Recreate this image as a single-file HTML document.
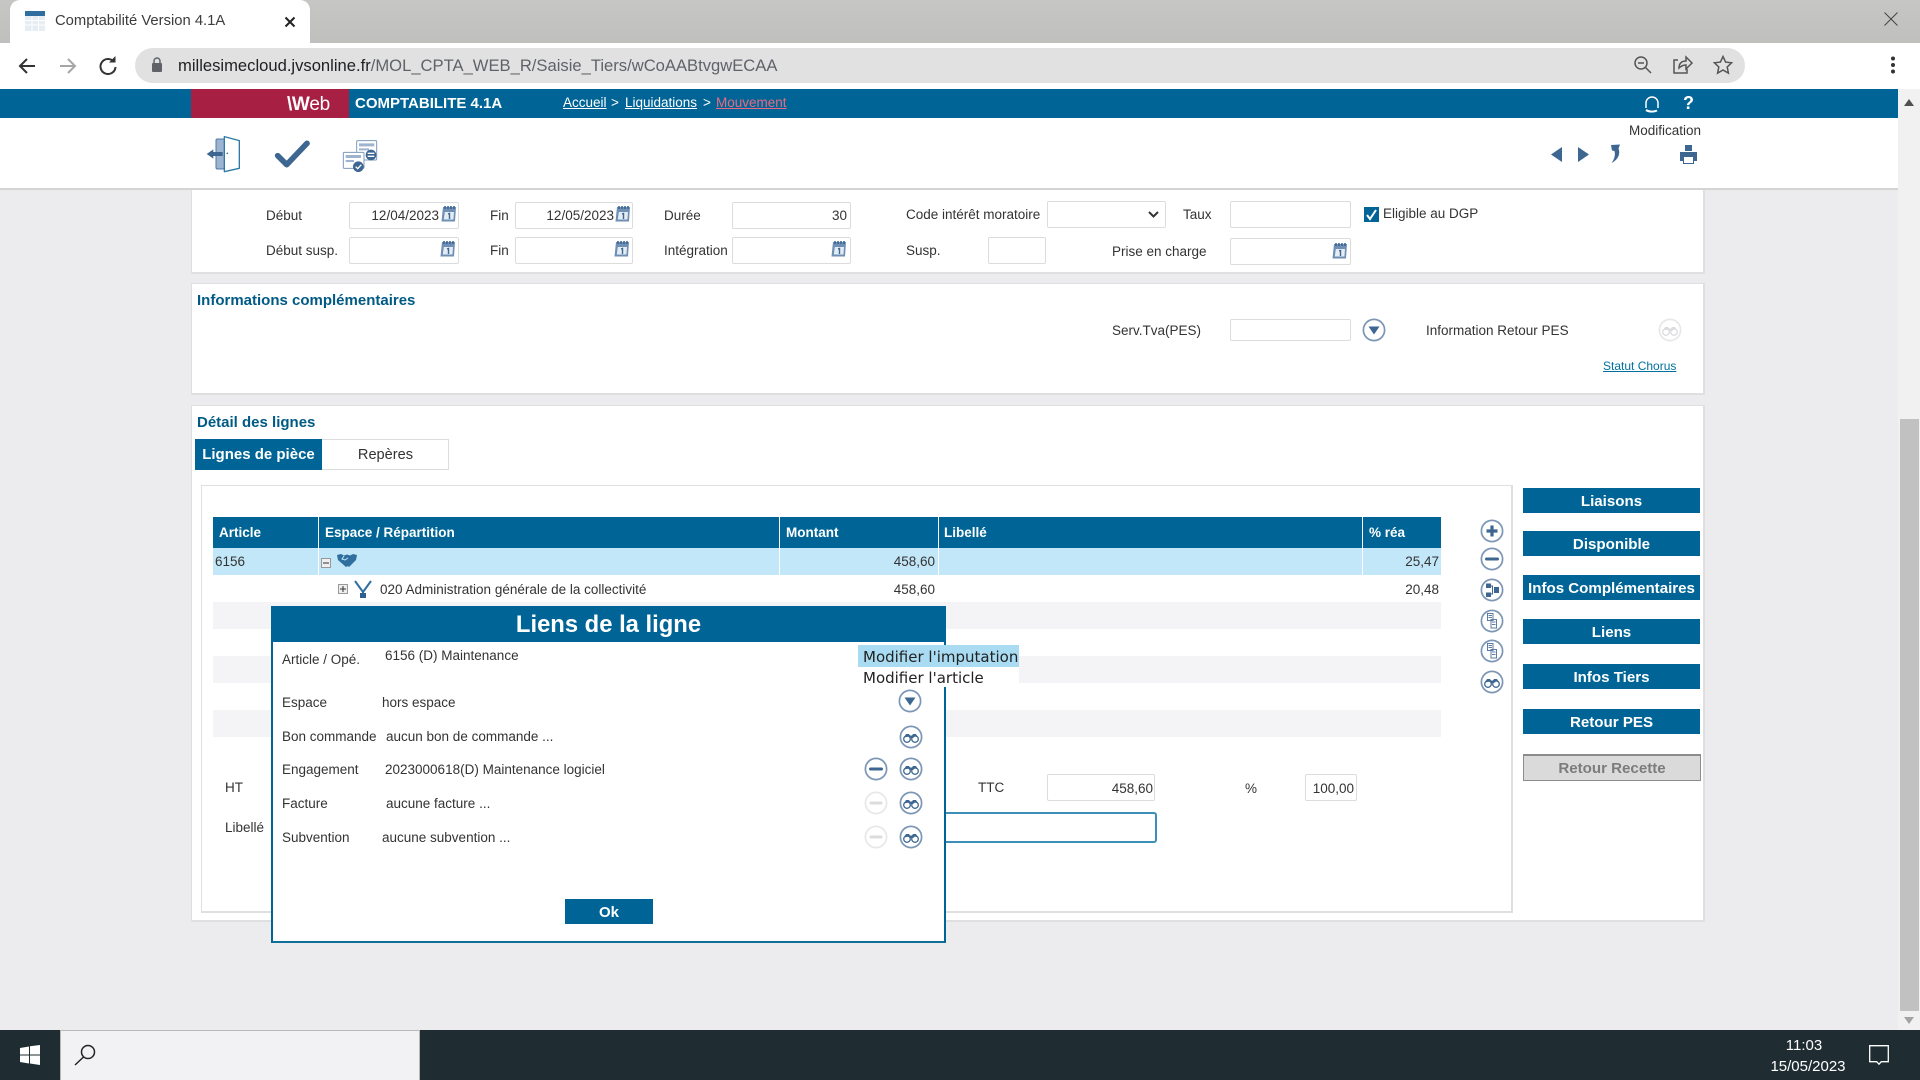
<!DOCTYPE html>
<html lang="fr"><head><meta charset="utf-8"><title>Comptabilité Version 4.1A</title>
<style>
html,body{margin:0;padding:0;width:1920px;height:1080px;overflow:hidden;background:#ecebed}
body{position:relative;font-family:"Liberation Sans",Arial,sans-serif;font-size:13.5px;color:#333}
.a,.t,.r,.c{position:absolute}
.t,.r,.c{line-height:16px;white-space:nowrap;margin-top:1px}
.r{text-align:right}.c{text-align:center}
.b{font-weight:bold}
.w{color:#fff}
.h{color:#005a85;font-weight:bold;font-size:15px}
.in{position:absolute;box-sizing:border-box;background:#fff;border:1px solid #dcdcdc;border-radius:2px}
.pn{position:absolute;box-sizing:border-box;background:#fff;border:1px solid #dfdfdf;border-right:2px solid #dfdfdf;border-bottom:2px solid #dfdfdf}
.btn{position:absolute;left:1523px;width:177px;height:25px;background:#006596;color:#fff;font-weight:bold;font-size:15.1px;line-height:27px;text-align:center}
.blk{position:absolute;background:#006596}
.ico{position:absolute;width:24px;height:24px}
.cal{position:absolute;width:18px;height:18px}
svg{display:block;overflow:visible}
u{text-decoration:underline}
</style></head><body>
<svg width="0" height="0" style="position:absolute">
<defs>
<g id="ring"><circle cx="12" cy="12" r="10.6" fill="#fff" stroke="#7c96b6" stroke-width="1.7"/></g>
<symbol id="plus" viewBox="0 0 24 24"><use href="#ring"/><path d="M12 6.500v11M6.500 12h11" stroke="#3d6690" stroke-width="3.200"/></symbol>
<symbol id="minus" viewBox="0 0 24 24"><use href="#ring"/><path d="M6.500 12h11" stroke="#3d6690" stroke-width="3" stroke-linecap="round"/></symbol>
<symbol id="minusf" viewBox="0 0 24 24"><circle cx="12" cy="12" r="10.6" fill="#fff" stroke="#e8e8ea" stroke-width="1.7"/><path d="M7 12h10" stroke="#dcdcde" stroke-width="3" stroke-linecap="round"/></symbol>
<symbol id="down" viewBox="0 0 24 24"><use href="#ring"/><path d="M6.500 8.500h11L12 16.500z" fill="#3d6690"/></symbol>
<symbol id="bino" viewBox="0 0 24 24"><use href="#ring"/><g fill="none" stroke="#3d6690" stroke-width="1.300"><circle cx="8" cy="14" r="3.300"/><circle cx="16" cy="14" r="3.300"/></g><path d="M5 12.500l2-3.500h3l1 1.500h2l1-1.500h3l2 3.500-3-1-2 1.500h-2l-2-1.500z" fill="#3d6690"/></symbol>
<symbol id="binof" viewBox="0 0 24 24"><circle cx="12" cy="12" r="10.6" fill="#fff" stroke="#e8e8ea" stroke-width="1.7"/><g fill="none" stroke="#dcdcde" stroke-width="1.300"><circle cx="8" cy="14" r="3.300"/><circle cx="16" cy="14" r="3.300"/></g><path d="M5 12.500l2-3.500h3l1 1.500h2l1-1.500h3l2 3.500-3-1-2 1.500h-2l-2-1.500z" fill="#dcdcde"/></symbol>
<symbol id="hier" viewBox="0 0 24 24"><use href="#ring"/><path d="M6 5.500h5v4.500H6zM6 14.500h5V19H6zM14 9h5v6h-5z" fill="#3d6690"/><path d="M11 8h1.500v8H11" fill="none" stroke="#3d6690"/></symbol>
<symbol id="docs" viewBox="0 0 24 24"><use href="#ring"/><g fill="#fff" stroke="#5b7da3" stroke-width="1"><path d="M7.500 4.500h5.500v7H7.500zM11 10.500h5.500v8.500H11z"/></g><path d="M8.500 6.500h3.500M8.500 8.500h3.500M12 13h3.500M12 15.500h3.500" stroke="#5b7da3"/></symbol>
<symbol id="cal" viewBox="0 0 18 18"><path d="M3 2h13l-1 14.500H1.500z" fill="#6f8fb5"/><path d="M4.800 7h9.200l-.6 7.500H3.800z" fill="#e4ecf4"/><path d="M5 1v3M8 1v3M11 1v3M14 1v3" stroke="#3d6690" stroke-width="1.600"/><path d="M8 9l1.500-.5V14" fill="none" stroke="#3d6690" stroke-width="1.400"/></symbol>
</defs></svg>

<!-- browser chrome -->
<div class="a" style="left:0;top:0;width:1920px;height:43px;background:linear-gradient(#c6c7c4,#bfc0bd)"></div>
<div class="a" style="left:10px;top:0;width:300px;height:43px;background:#fff;border-radius:10px 10px 0 0"></div>
<svg class="a" style="left:25px;top:11px" width="20" height="20"><rect width="20" height="20" fill="#e6edf3"/><rect width="20" height="5" fill="#2f6f9f"/><path d="M0 9.500h20M0 14h20M7 5v15M13.500 5v15" stroke="#fff"/></svg>
<span class="t" style="left:55px;top:12px;font-size:14.8px;color:#3c3c3c">Comptabilité Version 4.1A</span>
<svg class="a" style="left:284px;top:16px" width="12" height="12"><path d="M1.500 1.500l9 9M10.500 1.500l-9 9" stroke="#222" stroke-width="2"/></svg>
<svg class="a" style="left:1884px;top:12px" width="14" height="14"><path d="M.5.500l13 13M13.500.500l-13 13" stroke="#444" stroke-width="1"/></svg>
<div class="a" style="left:0;top:43px;width:1920px;height:46px;background:#fff"></div>
<div class="a" style="left:135px;top:48px;width:1610px;height:35px;border-radius:18px;background:#e1e1e2"></div>
<svg class="a" style="left:18px;top:56px" width="100" height="20" fill="none" stroke-width="2"><path d="M17 10H3M9 3l-7 7 7 7" stroke="#333"/><path d="M42 10h14M50 3l7 7-7 7" stroke="#a6a6a6"/><path d="M96 6a7.500 7.500 0 1 0 1.500 5" stroke="#333"/><path d="M91 6.500h6.500V0z" fill="#333" stroke="none"/></svg>
<svg class="a" style="left:151px;top:57px" width="12" height="16"><rect x="1" y="6" width="10" height="9" rx="1" fill="#5f6368"/><path d="M3 6V4a3 3 0 0 1 6 0v2" fill="none" stroke="#5f6368" stroke-width="1.500"/></svg>
<span class="t" style="left:178px;top:56px;font-size:16.6px;line-height:18px;color:#5f6368"><span style="color:#202124">millesimecloud.jvsonline.fr</span>/MOL_CPTA_WEB_R/Saisie_Tiers/wCoAABtvgwECAA</span>
<svg class="a" style="left:1632px;top:55px" width="100" height="20" fill="none" stroke="#555" stroke-width="1.500"><circle cx="9" cy="8" r="6"/><path d="M13.500 12.500L19 18M6 8h6"/><path d="M46 5h-4v13h13v-4M47 13c0-5 3-7 7-7V2l6 6-6 6v-4c-3 0-5 1-7 3z"/><path d="M91 1.500l2.600 5.600 6 .7-4.400 4.200 1.200 6.100L91 15l-5.400 3.100 1.200-6.100-4.400-4.200 6-.7z"/></svg>
<svg class="a" style="left:1891px;top:56px" width="4" height="18"><circle cx="2" cy="2.500" r="2" fill="#333"/><circle cx="2" cy="9" r="2" fill="#333"/><circle cx="2" cy="15.500" r="2" fill="#333"/></svg>

<!-- app header -->
<div class="blk" style="left:0;top:89px;width:1898px;height:29px"></div>
<div class="a" style="left:191px;top:89px;width:158px;height:29px;background:#a81f44"></div>
<span class="t w" style="left:287px;top:96px;font-size:19px;font-weight:bold;letter-spacing:-.4px"><b>\W</b><span style="font-weight:normal">eb</span></span>
<span class="t w b" style="left:355px;top:95px;font-size:15px">COMPTABILITE 4.1A</span>
<span class="t w" style="left:563px;top:94px"><u>Accueil</u></span>
<span class="t w" style="left:611px;top:94px">&gt;</span>
<span class="t w" style="left:625px;top:94px"><u>Liquidations</u></span>
<span class="t w" style="left:703px;top:94px">&gt;</span>
<span class="t w" style="left:716px;top:94px"><u style="color:#e96a80">Mouvement</u></span>
<svg class="a" style="left:1643px;top:95px" width="18" height="18" fill="none" stroke="#fff" stroke-width="1.500"><path d="M3 13V8a6 6 0 0 1 12 0v5"/><path d="M3 15c3 2 8 2 11 .5" stroke-width="2"/></svg>
<span class="t w b" style="left:1683px;top:94px;font-size:18px">?</span>

<!-- toolbar -->
<div class="a" style="left:0;top:118px;width:1898px;height:72px;background:#fff;border-bottom:2px solid #d4d4d4;box-sizing:border-box"></div>
<svg class="a" style="left:190px;top:90px" width="300" height="110" viewBox="0 0 900 330">
<rect x="78" y="147" width="26" height="90" rx="4" fill="#9db3cf" stroke="#4a7aa8" stroke-width="3"/>
<path d="M103 140l45 12v83l-45 10z" fill="#fff" stroke="#2f7aa5" stroke-width="4" stroke-linejoin="round"/>
<circle cx="112" cy="190" r="2.500" fill="#3d6690"/>
<path d="M50 192l20-14v8h28v12H70v8z" fill="#3d6690"/>
<path d="M263 197l27 27 61-64" fill="none" stroke="#3d6690" stroke-width="17" stroke-linecap="round" stroke-linejoin="round"/>
<rect x="500" y="152" width="60" height="58" rx="3" fill="#fff" stroke="#7b9bbd" stroke-width="3"/><path d="M507 160h46v9h-46zM507 175h30v6h-30z" fill="#9db3cf"/>
<rect x="460" y="187" width="62" height="48" rx="3" fill="#fff" stroke="#7b9bbd" stroke-width="3"/><path d="M467 195h46v9h-46zM467 210h25v6h-25z" fill="#9db3cf"/>
<circle cx="543" cy="195" r="16" fill="#3d6690"/><path d="M533 190h20M533 199h20" stroke="#fff" stroke-width="4"/>
<circle cx="505" cy="230" r="16" fill="#3d6690"/><path d="M497 230l6 6 11-12" fill="none" stroke="#fff" stroke-width="4"/>
</svg>
<span class="t" style="left:1629px;top:122px">Modification</span>
<svg class="a" style="left:1550px;top:144px" width="150" height="22" fill="#3d6690"><path d="M12 3v15L1 10.500zM28 3v15l11-7.500z"/><path d="M61 1l9-.5-1.500 4c2 5 0 11-7 14.500 3-4 4-8 3-12l-2.500-.5z"/><path d="M135 1h7v6h-7zM130 8h17v9h-3v3h-11v-3h-3z"/><rect x="134" y="13" width="9" height="6" fill="#fff"/></svg>

<!-- panels -->
<div class="pn" style="left:191px;top:190px;width:1514px;height:84px;border-top:0"></div>
<div class="pn" style="left:191px;top:283px;width:1514px;height:112px"></div>
<div class="pn" style="left:191px;top:405px;width:1514px;height:517px"></div>
<div class="pn" style="left:201px;top:485px;width:1312px;height:428px"></div>

<!-- form rows -->
<span class="t" style="left:266px;top:207px">Début</span>
<div class="in" style="left:349px;top:202px;width:110px;height:27px"></div>
<span class="r" style="left:349px;width:90px;top:207px">12/04/2023</span>
<svg class="cal" style="left:440px;top:205px"><use href="#cal"/></svg>
<span class="t" style="left:490px;top:207px">Fin</span>
<div class="in" style="left:515px;top:202px;width:118px;height:27px"></div>
<span class="r" style="left:515px;width:99px;top:207px">12/05/2023</span>
<svg class="cal" style="left:614px;top:205px"><use href="#cal"/></svg>
<span class="t" style="left:664px;top:207px">Durée</span>
<div class="in" style="left:732px;top:202px;width:119px;height:27px"></div>
<span class="r" style="left:732px;width:115px;top:207px">30</span>
<span class="t" style="left:906px;top:206px">Code intérêt moratoire</span>
<div class="in" style="left:1047px;top:201px;width:119px;height:27px"></div>
<svg class="a" style="left:1148px;top:211px" width="11" height="7"><path d="M1 1l4.500 4.500L10 1" fill="none" stroke="#333" stroke-width="2"/></svg>
<span class="t" style="left:1183px;top:206px">Taux</span>
<div class="in" style="left:1230px;top:201px;width:121px;height:27px"></div>
<svg class="a" style="left:1364px;top:207px" width="15" height="15"><rect width="15" height="15" fill="#006596"/><path d="M3 8l3 4 6-9" fill="none" stroke="#fff" stroke-width="2"/></svg>
<span class="t" style="left:1383px;top:205px">Eligible au DGP</span>

<span class="t" style="left:266px;top:242px">Début susp.</span>
<div class="in" style="left:349px;top:237px;width:110px;height:27px"></div>
<svg class="cal" style="left:439px;top:240px"><use href="#cal"/></svg>
<span class="t" style="left:490px;top:242px">Fin</span>
<div class="in" style="left:515px;top:237px;width:118px;height:27px"></div>
<svg class="cal" style="left:613px;top:240px"><use href="#cal"/></svg>
<span class="t" style="left:664px;top:242px">Intégration</span>
<div class="in" style="left:732px;top:237px;width:119px;height:27px"></div>
<svg class="cal" style="left:830px;top:240px"><use href="#cal"/></svg>
<span class="t" style="left:906px;top:242px">Susp.</span>
<div class="in" style="left:988px;top:237px;width:58px;height:27px"></div>
<span class="t" style="left:1112px;top:243px">Prise en charge</span>
<div class="in" style="left:1230px;top:238px;width:121px;height:27px"></div>
<svg class="cal" style="left:1331px;top:242px"><use href="#cal"/></svg>

<!-- infos -->
<span class="t h" style="left:197px;top:292px">Informations complémentaires</span>
<span class="t" style="left:1112px;top:322px">Serv.Tva(PES)</span>
<div class="in" style="left:1230px;top:319px;width:121px;height:22px"></div>
<svg class="ico" style="left:1362px;top:318px"><use href="#down"/></svg>
<span class="t" style="left:1426px;top:322px">Information Retour PES</span>
<svg class="ico" style="left:1658px;top:318px"><use href="#binof"/></svg>
<span class="t" style="left:1603px;top:357px;font-size:12px;color:#00709f"><u>Statut Chorus</u></span>

<!-- detail -->
<span class="t h" style="left:197px;top:414px">Détail des lignes</span>
<div class="blk" style="left:195px;top:439px;width:127px;height:31px"></div>
<span class="c w b" style="left:195px;width:127px;top:446px;font-size:15px">Lignes de pièce</span>
<div class="in" style="left:322px;top:439px;width:127px;height:31px;border-radius:0;border-left:0"></div>
<span class="c" style="left:322px;width:127px;top:446px;font-size:14.6px">Repères</span>

<!-- table -->
<div class="blk" style="left:213px;top:517px;width:1228px;height:31px"></div>
<div class="a" style="left:213px;top:548px;width:1228px;height:27px;background:#c2e7f9"></div>
<div class="a" style="left:213px;top:602px;width:1228px;height:27px;background:#f4f3f5"></div>
<div class="a" style="left:213px;top:656px;width:1228px;height:27px;background:#f4f3f5"></div>
<div class="a" style="left:213px;top:710px;width:1228px;height:27px;background:#f4f3f5"></div>
<div class="a" style="left:318px;top:517px;width:1px;height:58px;background:#fff"></div>
<div class="a" style="left:779px;top:517px;width:1px;height:58px;background:#fff"></div>
<div class="a" style="left:938px;top:517px;width:1px;height:58px;background:#fff"></div>
<div class="a" style="left:1362px;top:517px;width:1px;height:58px;background:#fff"></div>
<span class="t w b" style="left:219px;top:524px">Article</span>
<span class="t w b" style="left:325px;top:524px">Espace / Répartition</span>
<span class="t w b" style="left:786px;top:524px">Montant</span>
<span class="t w b" style="left:944px;top:524px">Libellé</span>
<span class="t w b" style="left:1369px;top:524px">% réa</span>
<span class="t" style="left:215px;top:553px">6156</span>
<svg class="a" style="left:321px;top:558px" width="10" height="10"><rect x=".5" y=".5" width="9" height="9" fill="#eee" stroke="#999"/><path d="M2 5h6" stroke="#333"/></svg>
<svg class="a" style="left:337px;top:553px" width="20" height="15"><path d="M0 2l4-1 3 1.500L10 1.500l3 1 3-1.500 4 1-1 5-7 7-1-1-2 1-8-7z" fill="#2f6f9f"/><path d="M7 3l-2 3 3 1 3-2" fill="none" stroke="#c2e7f9"/></svg>
<span class="r" style="left:800px;width:135px;top:553px">458,60</span>
<span class="r" style="left:1340px;width:99px;top:553px">25,47</span>
<svg class="a" style="left:338px;top:584px" width="10" height="10"><rect x=".5" y=".5" width="9" height="9" fill="#eee" stroke="#999"/><path d="M2 5h6M5 2v6" stroke="#333"/></svg>
<svg class="a" style="left:354px;top:580px" width="18" height="18" fill="none" stroke="#2f6f9f" stroke-width="2"><path d="M1 1l8 11 8-11M9 12v2"/><rect x="6" y="13" width="6" height="5" fill="#2f5f8f" stroke="none"/></svg>
<span class="t" style="left:380px;top:581px">020 Administration générale de la collectivité</span>
<span class="r" style="left:800px;width:135px;top:581px">458,60</span>
<span class="r" style="left:1340px;width:99px;top:581px">20,48</span>

<!-- side icons -->
<svg class="ico" style="left:1480px;top:519px"><use href="#plus"/></svg>
<svg class="ico" style="left:1480px;top:547px"><use href="#minus"/></svg>
<svg class="ico" style="left:1480px;top:578px"><use href="#hier"/></svg>
<svg class="ico" style="left:1480px;top:609px"><use href="#docs"/></svg>
<svg class="ico" style="left:1480px;top:639px"><use href="#docs"/></svg>
<svg class="ico" style="left:1480px;top:670px"><use href="#bino"/></svg>

<!-- buttons -->
<div class="btn" style="top:488px">Liaisons</div>
<div class="btn" style="top:531px">Disponible</div>
<div class="btn" style="top:575px">Infos Complémentaires</div>
<div class="btn" style="top:619px">Liens</div>
<div class="btn" style="top:664px">Infos Tiers</div>
<div class="btn" style="top:709px">Retour PES</div>
<div class="btn" style="top:754px;height:27px;width:178px;box-sizing:border-box;background:#dadada;border:1px solid #8c8c8c;border-top-width:2px;color:#7c7c7c;line-height:25px">Retour Recette</div>

<!-- lower form -->
<span class="t" style="left:225px;top:779px">HT</span>
<span class="t" style="left:225px;top:819px">Libellé</span>
<span class="t" style="left:978px;top:779px">TTC</span>
<div class="in" style="left:1047px;top:774px;width:108px;height:27px"></div>
<span class="r" style="left:1047px;width:106px;top:780px">458,60</span>
<span class="t" style="left:1245px;top:780px">%</span>
<div class="in" style="left:1305px;top:774px;width:52px;height:27px"></div>
<span class="r" style="left:1305px;width:49px;top:780px">100,00</span>
<div class="a" style="left:900px;top:812px;width:257px;height:31px;box-sizing:border-box;border:2px solid #3b8fb8;border-radius:3px;background:#fff"></div>

<!-- dialog -->
<div class="a" style="left:271px;top:606px;width:675px;height:337px;box-sizing:border-box;background:#fff;border:2px solid #006596;border-bottom-color:#0f6f98"></div>
<div class="blk" style="left:271px;top:606px;width:675px;height:36px"></div>
<span class="c w b" style="left:271px;width:675px;top:611px;font-size:23.8px;line-height:26px">Liens de la ligne</span>
<span class="t" style="left:282px;top:651px">Article / Opé.</span>
<span class="t" style="left:385px;top:647px">6156 (D) Maintenance</span>
<span class="t" style="left:282px;top:694px">Espace</span>
<span class="t" style="left:382px;top:694px">hors espace</span>
<span class="t" style="left:282px;top:728px">Bon commande</span>
<span class="t" style="left:386px;top:728px">aucun bon de commande ...</span>
<span class="t" style="left:282px;top:761px">Engagement</span>
<span class="t" style="left:385px;top:761px">2023000618(D) Maintenance logiciel</span>
<span class="t" style="left:282px;top:795px">Facture</span>
<span class="t" style="left:386px;top:795px">aucune facture ...</span>
<span class="t" style="left:282px;top:829px">Subvention</span>
<span class="t" style="left:382px;top:829px">aucune subvention ...</span>
<svg class="ico" style="left:898px;top:689px"><use href="#down"/></svg>
<svg class="ico" style="left:899px;top:725px"><use href="#bino"/></svg>
<svg class="ico" style="left:864px;top:757px"><use href="#minus"/></svg>
<svg class="ico" style="left:899px;top:757px"><use href="#bino"/></svg>
<svg class="ico" style="left:864px;top:791px"><use href="#minusf"/></svg>
<svg class="ico" style="left:899px;top:791px"><use href="#bino"/></svg>
<svg class="ico" style="left:864px;top:825px"><use href="#minusf"/></svg>
<svg class="ico" style="left:899px;top:825px"><use href="#bino"/></svg>
<div class="blk" style="left:565px;top:899px;width:88px;height:25px;color:#fff;font-weight:bold;font-size:15px;line-height:27px;text-align:center">Ok</div>

<!-- context menu -->
<div class="a" style="left:858px;top:645px;width:161px;height:22px;background:#a9dcf3"></div>
<div class="a" style="left:858px;top:667px;width:161px;height:20px;background:#fff"></div>
<span class="t" style="left:863px;top:648px;font-family:'DejaVu Sans',sans-serif;font-size:15px;color:#222">Modifier l'imputation</span>
<span class="t" style="left:863px;top:669px;font-family:'DejaVu Sans',sans-serif;font-size:15px;color:#222">Modifier l'article</span>

<!-- scrollbar -->
<div class="a" style="left:1898px;top:89px;width:22px;height:941px;background:#f1f1f1"></div>
<div class="a" style="left:1900px;top:419px;width:19px;height:592px;background:#c1c1c1"></div>
<svg class="a" style="left:1904px;top:99px" width="10" height="7"><path d="M5 0l5 7H0z" fill="#505050"/></svg>
<svg class="a" style="left:1904px;top:1017px" width="10" height="7"><path d="M0 0h10L5 7z" fill="#a3a3a3"/></svg>

<!-- taskbar -->
<div class="a" style="left:0;top:1030px;width:1920px;height:50px;background:#1f2d32"></div>
<svg class="a" style="left:20px;top:1045px" width="20" height="20"><path d="M0 3l9-1.500V9.500H0zM10 1.200L20 0v9.500H10zM0 10.500h9v8L0 17zM10 10.500h10V20l-10-1.500z" fill="#fff"/></svg>
<div class="a" style="left:60px;top:1030px;width:360px;height:50px;box-sizing:border-box;background:#f2f1f3;border:1px solid #b8b8b8;border-bottom:0"></div>
<svg class="a" style="left:74px;top:1044px" width="24" height="22" fill="none" stroke="#222" stroke-width="1.500"><circle cx="14" cy="8" r="6.500"/><path d="M9.500 13L1 21"/></svg>
<span class="c w" style="left:1770px;width:68px;top:1037px;font-size:15px">11:03</span>
<span class="c w" style="left:1768px;width:80px;top:1058px;font-size:15px">15/05/2023</span>
<svg class="a" style="left:1869px;top:1045px" width="20" height="20" fill="none" stroke="#fff" stroke-width="1.300"><path d="M.7.700h18.600v16h-7l-2.300 2.500-2.300-2.500h-7z"/></svg>
</body></html>
